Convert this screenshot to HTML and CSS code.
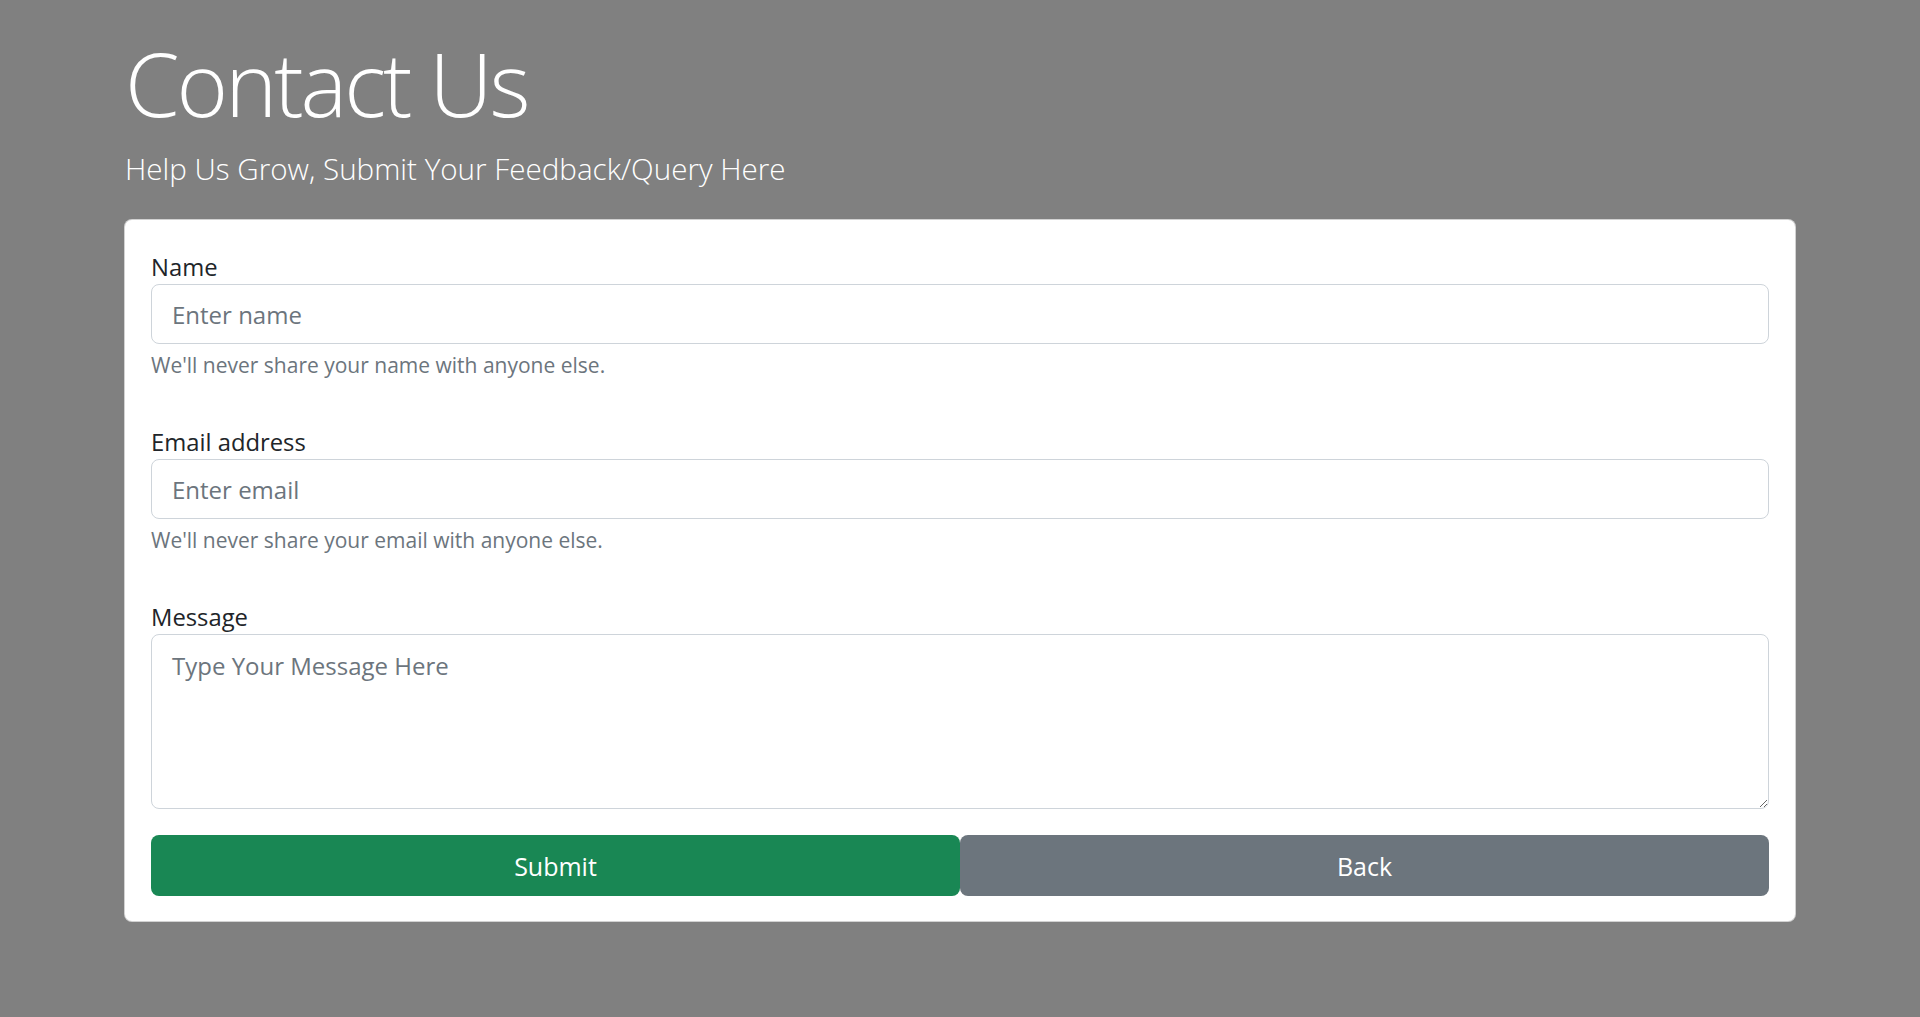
FILE: index.html
```html
<!DOCTYPE html>
<html lang="en">
<head>
<meta charset="utf-8">
<title>Contact Us</title>
<link rel="stylesheet" href="styles.css">
</head>
<body>
<main class="page">
  <header class="hero">
    <h1 class="title">Contact Us</h1>
    <p class="subtitle">Help Us Grow, Submit Your Feedback/Query Here</p>
  </header>
  <form class="card">
    <div class="field">
      <label class="label" for="name">Name</label>
      <input class="control" id="name" type="text" placeholder="Enter name">
      <small class="help">We'll never share your name with anyone else.</small>
    </div>
    <div class="field">
      <label class="label" for="email">Email address</label>
      <input class="control" id="email" type="email" placeholder="Enter email">
      <small class="help">We'll never share your email with anyone else.</small>
    </div>
    <div class="field field-last">
      <label class="label" for="msg">Message</label>
      <textarea class="control area" id="msg" placeholder="Type Your Message Here"></textarea>
    </div>
    <div class="actions">
      <button class="btn btn-submit" type="button">Submit</button>
      <button class="btn btn-back" type="button">Back</button>
    </div>
  </form>
</main>
</body>
</html>
```

FILE: styles.css
```css
* { box-sizing: border-box; }
html, body { margin: 0; padding: 0; }
body {
  background: #808080;
  font-family: "Open Sans", "Noto Sans", sans-serif;
  color: #212529;
  height: 1017px;
  overflow: hidden;
}
.page {
  padding: 0 124px;
}
.hero {
  padding-top: 33px;
  padding-left: 1px;
}
.title {
  margin: 0;
  font-size: 88px;
  font-weight: 300;
  line-height: 100px;
  color: #fff;
  letter-spacing: -3px;
}
.subtitle {
  margin: 16px 0 0;
  font-size: 29.6px;
  font-weight: 300;
  line-height: 40px;
  color: #fff;
}
.card {
  margin-top: 30px;
  background: #fff;
  border: 1px solid rgba(0,0,0,0.175);
  border-radius: 8px;
  padding: 30px 26px 25px;
}
.field {
  display: flex;
  flex-direction: column;
  padding-bottom: 45px;
}
.field-last { padding-bottom: 26px; }
.label {
  font-size: 23.8px;
  line-height: 34px;
  color: #212529;
}
.control {
  display: block;
  width: 100%;
  height: 60px;
  padding: 10px 20px;
  font-family: inherit;
  font-size: 24px;
  line-height: 38px;
  color: #212529;
  background: #fff;
  border: 1px solid #ced4da;
  border-radius: 8px;
  outline: none;
}
.control::placeholder { color: #6c757d; opacity: 1; }
.input-pad { padding-top: 11px; }
.area {
  height: 175px;
  resize: vertical;
  padding-top: 12px;
}
.help {
  margin-top: 6px;
  font-size: 21px;
  line-height: 30px;
  color: #6c757d;
}
.actions {
  display: flex;
}
.btn {
  flex: 1 1 0;
  height: 61px;
  border: none;
  border-radius: 8px;
  color: #fff;
  font-family: inherit;
  font-size: 25px;
  line-height: 38px;
  cursor: pointer;
}
.btn-submit { background: #198754; }
.btn-back { background: #6c757d; }
```
